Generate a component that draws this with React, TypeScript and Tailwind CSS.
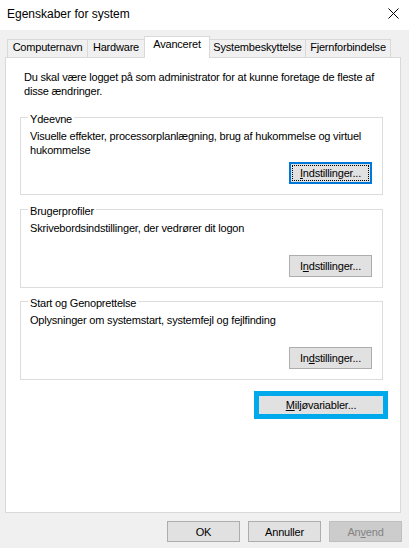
export default function App() {
  return (
    <div className="w-[409px] h-[548px] bg-[#f0f0f0] flex flex-col font-['Liberation_Sans',Arial,sans-serif] text-[11px] leading-[14px] tracking-[-0.2px] text-black overflow-hidden">
      {/* Title bar */}
      <div className="h-[30px] bg-white flex items-start justify-between shrink-0">
        <div className="pl-[7px] pt-[7px] text-[12px] leading-[15px] tracking-normal">Egenskaber for system</div>
        <svg className="mt-[8px] mr-[10px]" width="11" height="11" viewBox="0 0 11 11">
          <path d="M0.5 0.5 L10.5 10.5 M10.5 0.5 L0.5 10.5" stroke="#000" strokeWidth="1" fill="none" />
        </svg>
      </div>

      {/* Tabs */}
      <div className="flex items-end h-[22px] mt-[6px] pl-[7px] shrink-0">
        <div className="w-[81px] h-[18px] mb-px border border-b-0 border-[#d9d9d9] bg-[#f0f0f0] text-center">Computernavn</div>
        <div className="w-[58px] h-[18px] mb-px -ml-px border border-b-0 border-[#d9d9d9] bg-[#f0f0f0] text-center">Hardware</div>
        <div className="relative z-10 w-[66px] h-[22px] -ml-px border border-b-0 border-[#d9d9d9] bg-white text-center">Avanceret</div>
        <div className="w-[97px] h-[18px] mb-px -ml-px border border-b-0 border-[#d9d9d9] bg-[#f0f0f0] text-center">Systembeskyttelse</div>
        <div className="w-[86px] h-[18px] mb-px -ml-px border border-b-0 border-[#d9d9d9] bg-[#f0f0f0] text-center">Fjernforbindelse</div>
      </div>

      {/* Panel */}
      <div className="mx-[5px] w-[396px] h-[456px] -mt-px border border-[#d9d9d9] bg-white pt-[12px] px-[14px] shrink-0 flex flex-col">
        <p className="ml-[4px] whitespace-nowrap">
          Du skal være logget på som administrator for at kunne foretage de fleste af
          <br />
          disse ændringer.
        </p>

        <Group title="Ydeevne" h="h-[78px]" mt="mt-[19px]">
          <p className="mt-[3px] pl-[9px] whitespace-nowrap">
            Visuelle effekter, processorplanlægning, brug af hukommelse og virtuel
            <br />
            hukommelse
          </p>
          <button className="mt-auto self-end mr-[10px] mb-[10px] w-[83px] h-[22px] border-2 border-[#0078d7] bg-[#e1e1e1] p-px">
            <span className="flex w-full h-full items-center justify-center border border-dotted border-black">
              <span><u>I</u>ndstillinger...</span>
            </span>
          </button>
        </Group>

        <Group title="Brugerprofiler" h="h-[79px]" mt="mt-[14px]">
          <p className="mt-[3px] pl-[9px] whitespace-nowrap">Skrivebordsindstillinger, der vedrører dit logon</p>
          <button className="mt-auto self-end mr-[10px] mb-[10px] w-[83px] h-[22px] border border-[#adadad] bg-[#e1e1e1] flex items-center justify-center">
            <span>I<u>n</u>dstillinger...</span>
          </button>
        </Group>

        <Group title="Start og Genoprettelse" h="h-[79px]" mt="mt-[13px]">
          <p className="mt-[3px] pl-[9px] whitespace-nowrap">Oplysninger om systemstart, systemfejl og fejlfinding</p>
          <button className="mt-auto self-end mr-[10px] mb-[10px] w-[83px] h-[22px] border border-[#adadad] bg-[#e1e1e1] flex items-center justify-center">
            <span>In<u>d</u>stillinger...</span>
          </button>
        </Group>

        <div className="mt-[11px] ml-[234px] w-[134px] h-[28px] border-[5px] border-[#00a8ec] bg-[#e1e1e1] flex items-center justify-center">
          <span><u>M</u>iljøvariabler...</span>
        </div>
      </div>

      {/* Bottom buttons */}
      <div className="flex justify-end gap-[8px] pr-[7px] mt-[8px] shrink-0">
        <button className="w-[73px] h-[21px] border border-[#adadad] bg-[#e1e1e1] flex items-center justify-center">OK</button>
        <button className="w-[73px] h-[21px] border border-[#adadad] bg-[#e1e1e1] flex items-center justify-center">Annuller</button>
        <button className="w-[73px] h-[21px] border border-[#bfbfbf] bg-[#cccccc] text-[#838383] flex items-center justify-center">
          <span>An<u>v</u>end</span>
        </button>
      </div>
    </div>
  );
}

function Group({ title, h, mt, children }: { title: string; h: string; mt: string; children: React.ReactNode }) {
  return (
    <div className={`${mt} ${h} w-[363px] border border-[#dcdcdc] flex flex-col shrink-0`}>
      <div className="-mt-[6px] ml-[7px] px-[2px] bg-white self-start whitespace-nowrap">{title}</div>
      {children}
    </div>
  );
}
